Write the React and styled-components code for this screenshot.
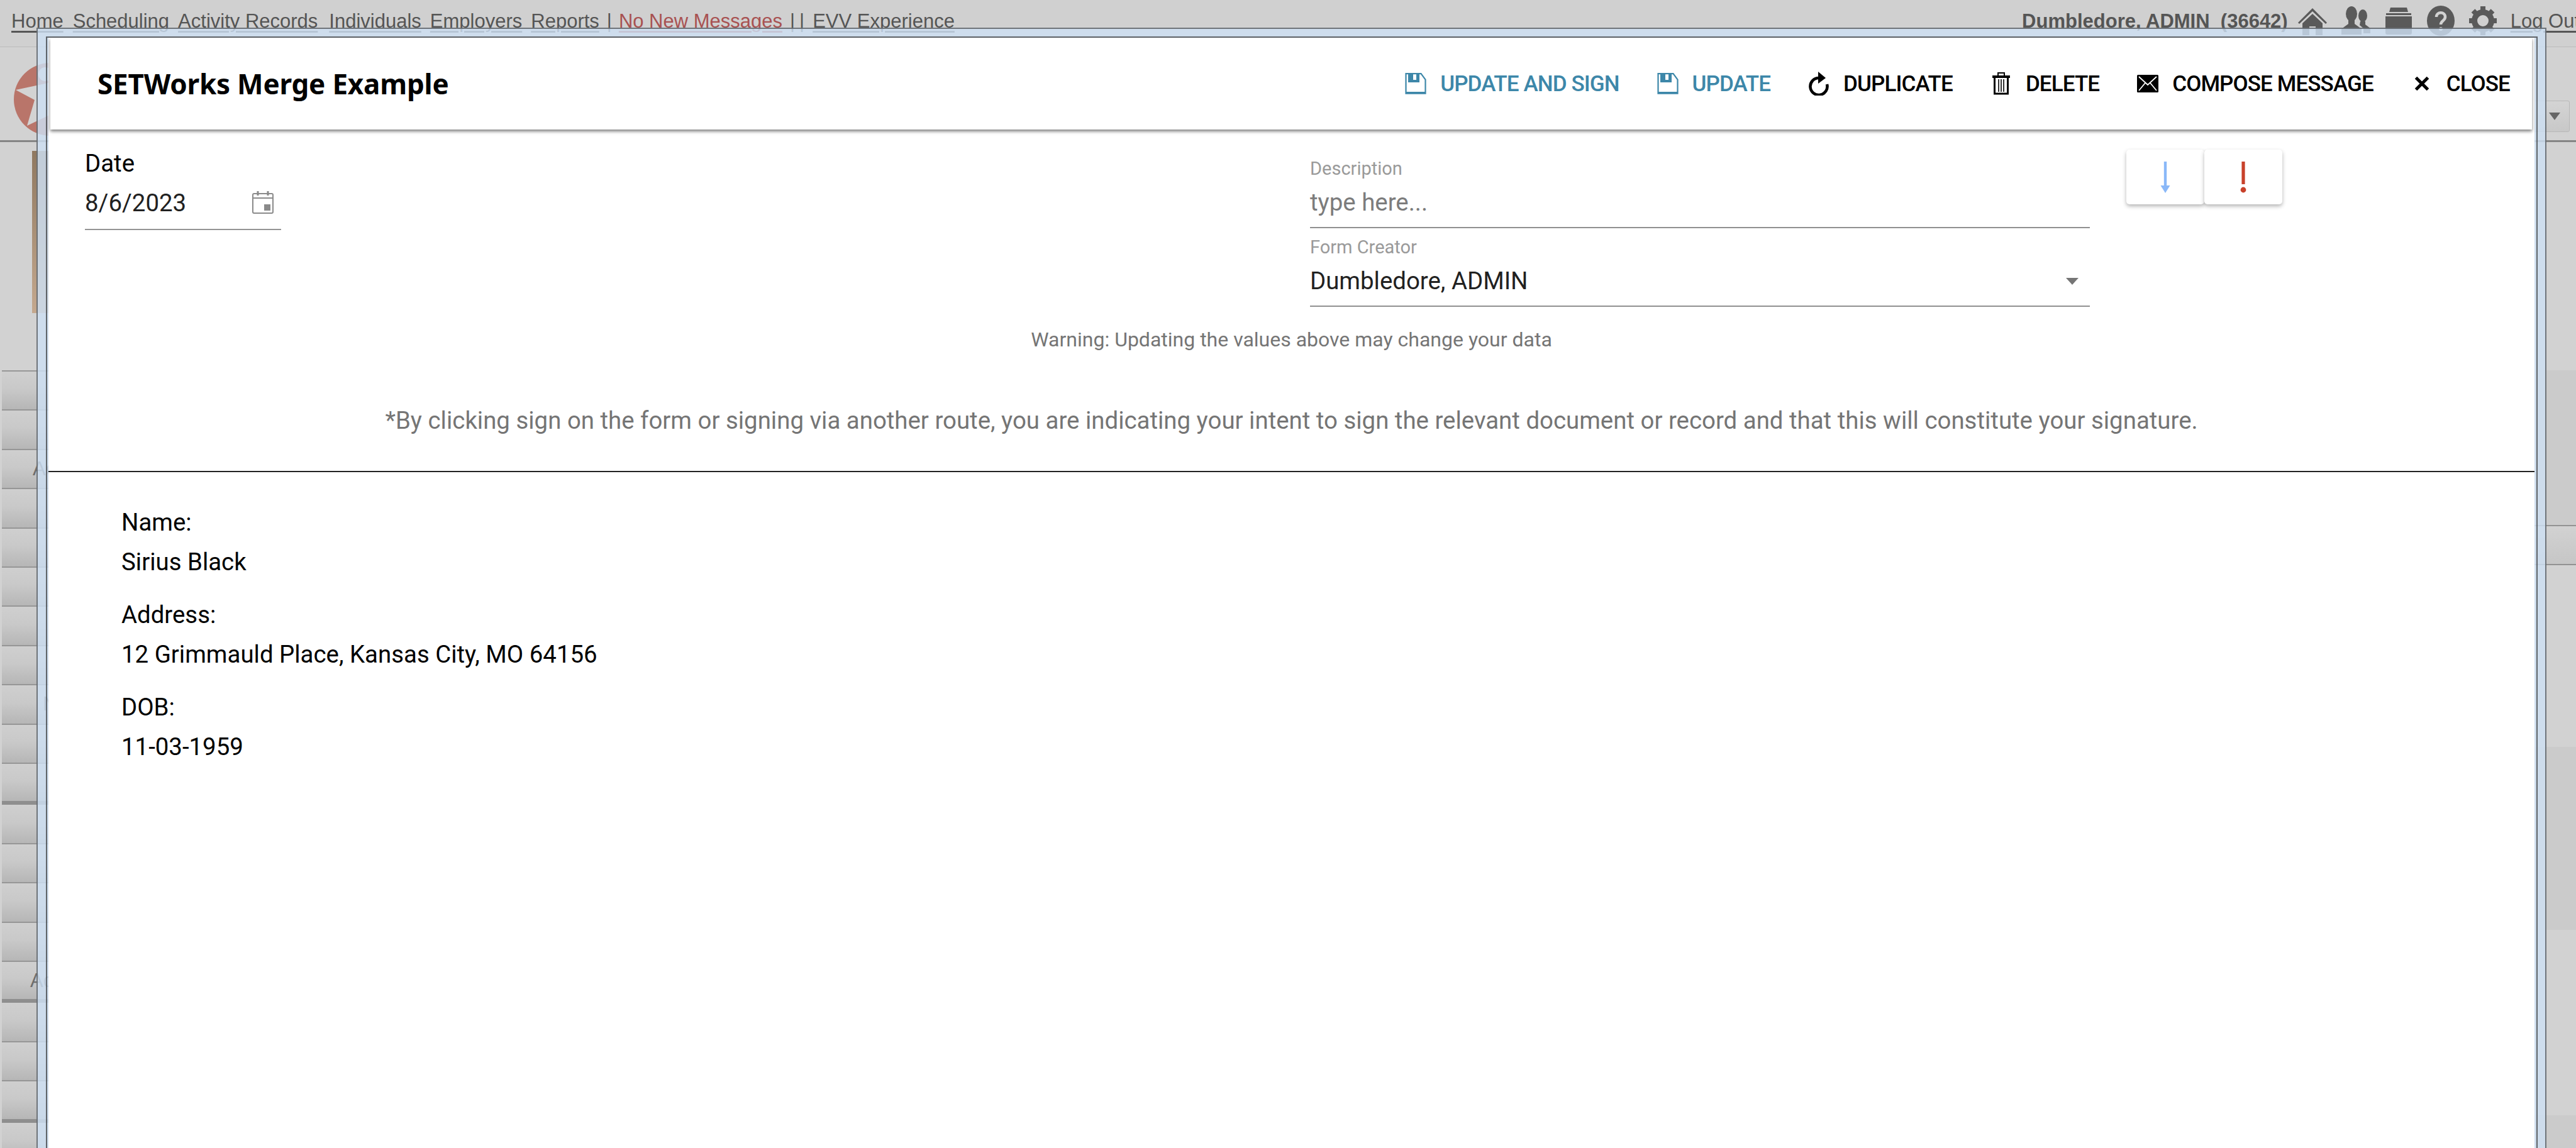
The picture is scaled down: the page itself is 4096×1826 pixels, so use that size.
import React from 'react';
import styled, { createGlobalStyle } from 'styled-components';

const GlobalStyle = createGlobalStyle`
  html, body { margin: 0; padding: 0; background: #d2d2d2; }
  * { box-sizing: border-box; }
`;

const navLinks = [
  { label: 'Home', gap: 15 },
  { label: 'Scheduling', gap: 14 },
  { label: 'Activity Records', gap: 18 },
  { label: 'Individuals', gap: 14 },
  { label: 'Employers', gap: 14 },
  { label: 'Reports', gap: 0 },
];

const sidebarRows = [
  {}, {}, { label: 'Ac', indent: 49 }, {}, {}, {}, {}, {},
  { label: 'N', indent: 65 }, {}, { heavy: true }, {}, {}, {}, {},
  { label: 'Ac', indent: 45, heavy: true }, {}, {}, { heavy: true }, {},
];

const actions = [
  { label: 'UPDATE AND SIGN', icon: 'save', accent: true },
  { label: 'UPDATE', icon: 'save', accent: true },
  { label: 'DUPLICATE', icon: 'duplicate' },
  { label: 'DELETE', icon: 'trash' },
  { label: 'COMPOSE MESSAGE', icon: 'mail' },
  { label: 'CLOSE', icon: 'close' },
];

const mergeFields = [
  { name: 'Name:', value: 'Sirius Black' },
  { name: 'Address:', value: '12 Grimmauld Place, Kansas City, MO 64156' },
  { name: 'DOB:', value: '11-03-1959' },
];

const ActionIcon = ({ type }) => {
  if (type === 'save') {
    return (
      <svg width="34" height="34" viewBox="0 0 34 34" fill="none">
        <path d="M1.5 1.2h24l7 9.5v22H1.5z" stroke="currentColor" strokeWidth="2.2" />
        <path fillRule="evenodd" d="M5 1h18v14H5zM13 2v9h5V2z" fill="currentColor" />
        <path d="M1 30h32v3H1z" fill="currentColor" />
      </svg>
    );
  }
  if (type === 'duplicate') {
    return (
      <svg width="34" height="38" viewBox="0 0 34 38" fill="none">
        <path d="M17 10a13.5 13.5 0 1 0 13 10" stroke="currentColor" strokeWidth="4.6" />
        <path d="M16 0l12 10-12 9z" fill="currentColor" />
      </svg>
    );
  }
  if (type === 'trash') {
    return (
      <svg width="28" height="36" viewBox="0 0 28 36" fill="none">
        <path d="M0 5h28v4H0z" fill="currentColor" />
        <path d="M9 5V1h10v4" stroke="currentColor" strokeWidth="2" />
        <path d="M3.5 8v26h21V8" stroke="currentColor" strokeWidth="3" />
        <path d="M10 11v20M14 11v20M18 11v20" stroke="currentColor" strokeWidth="1.6" />
      </svg>
    );
  }
  if (type === 'mail') {
    return (
      <svg width="34" height="28" viewBox="0 0 34 28">
        <rect width="34" height="28" rx="1.5" fill="currentColor" />
        <path d="M3 3l14 13L31 3M3 25l10-12M31 25L21 13" stroke="#fff" strokeWidth="1.8" fill="none" />
      </svg>
    );
  }
  return (
    <svg width="24" height="24" viewBox="0 0 24 24">
      <path d="M2.5 2.5l19 19M21.5 2.5l-19 19" stroke="currentColor" strokeWidth="5" />
    </svg>
  );
};

const CalendarIcon = () => (
  <svg width="34" height="36" viewBox="0 0 34 36" fill="none">
    <rect x="1" y="4" width="32" height="31" rx="2" stroke="#8a8a8a" strokeWidth="2" />
    <path d="M1 11h32" stroke="#8a8a8a" strokeWidth="2" />
    <path d="M9 0v7M25 0v7" stroke="#8a8a8a" strokeWidth="3" />
    <rect x="19" y="21" width="10" height="10" fill="#8a8a8a" />
  </svg>
);

const HomeIcon = () => (
  <svg width="46" height="46" viewBox="0 0 46 46">
    <path d="M23 3L0 26l2 2L23 8l21 20 2-2z" fill="#5a5a5a" />
    <path d="M23 12L7 27v19h11V32h10v14h11V27z" fill="#5a5a5a" />
  </svg>
);

const PeopleIcon = () => (
  <svg width="46" height="46" viewBox="0 0 46 46" fill="#5a5a5a">
    <ellipse cx="16" cy="12" rx="9" ry="12" />
    <path d="M11 22h10v6l11 8v9H0v-9l11-8z" />
    <ellipse cx="34" cy="15" rx="7" ry="10" />
    <path d="M30 24h8v5l8 6v8H35v-8l-6-5z" />
  </svg>
);

const BoxIcon = () => (
  <svg width="44" height="46" viewBox="0 0 44 46" fill="#5a5a5a">
    <path d="M9 2h26l2 7H7z" />
    <path d="M2 11h40v3H2z" />
    <path d="M1 16h42v26a3 3 0 0 1-3 3H4a3 3 0 0 1-3-3z" />
  </svg>
);

const HelpIcon = () => (
  <svg width="44" height="48" viewBox="0 0 44 48">
    <ellipse cx="22" cy="24" rx="22" ry="24" fill="#5a5a5a" />
    <path d="M15 18c0-9 14-9 14 0 0 6-7 6-7 12" stroke="#d2d2d2" strokeWidth="4.5" fill="none" />
    <circle cx="22" cy="37" r="3" fill="#d2d2d2" />
  </svg>
);

const GearIcon = () => (
  <svg width="44" height="46" viewBox="0 0 44 46">
    <circle cx="22" cy="23" r="13.5" fill="none" stroke="#5a5a5a" strokeWidth="9" />
    <path
      d="M22 0v46M0 23h44M6.5 7l31 32M37.5 7l-31 32"
      stroke="#5a5a5a"
      strokeWidth="8"
      strokeDasharray="8 30 8 30"
    />
  </svg>
);

const Logo = () => (
  <svg width="116" height="116" viewBox="0 0 116 116">
    <circle cx="58" cy="58" r="58" fill="#b9756a" />
    <circle cx="50" cy="18" r="11" fill="#d3d3d3" />
    <path d="M3 43l75-16 12 40-69 33 12-41z" fill="#d3d3d3" />
  </svg>
);

const App = () => (
  <Page>
    <GlobalStyle />
    <TopNav>
      {navLinks.map((link) => (
        <NavLink key={link.label} $gap={link.gap}>{link.label}</NavLink>
      ))}
      <NavBar>|</NavBar>
      <NavLink $alert>No New Messages</NavLink>
      <NavBar $double>||</NavBar>
      <NavLink>EVV Experience</NavLink>
      <UserArea>
        <UserName>Dumbledore, ADMIN&nbsp;&nbsp;(36642)</UserName>
        <NavIcons>
          <HomeIcon />
          <PeopleIcon />
          <BoxIcon />
          <HelpIcon />
          <GearIcon />
        </NavIcons>
        <NavLink>Log Out</NavLink>
      </UserArea>
    </TopNav>
    <Banner>
      <Logo />
      <BannerSelect><BannerArrow /></BannerSelect>
    </Banner>
    <Body>
      <Sidebar>
        <Photo />
        <RowList>
          {sidebarRows.map((row, i) => (
            <SideRow key={i} $heavy={row.heavy} $indent={row.indent}>{row.label}</SideRow>
          ))}
        </RowList>
      </Sidebar>
      <Main>
        <Band $h={363} />
        <Band $h={248} $tone="#cbcbcb" $line />
        <Band $h={62} $tone="linear-gradient(#d2d2d2, #c6c6c6)" $line />
        <Band $h={289} />
        <Band $h={291} $tone="#cbcbcb" />
        <Band $h={295} />
        <Band $h={60} $tone="#cbcbcb" />
      </Main>
    </Body>

    <ModalFrame>
      <ModalInner>
        <Panel>
          <PanelHeader>
            <Title>SETWorks Merge Example</Title>
            <Toolbar>
              {actions.map((action) => (
                <ActionButton key={action.label} $accent={action.accent}>
                  <IconSlot><ActionIcon type={action.icon} /></IconSlot>
                  {action.label}
                </ActionButton>
              ))}
            </Toolbar>
          </PanelHeader>

          <FormGrid>
            <DateField>
              <DateLabel>Date</DateLabel>
              <DateValue>
                8/6/2023
                <CalendarIcon />
              </DateValue>
            </DateField>
            <RightFields>
              <Field>
                <SmallLabel>Description</SmallLabel>
                <FieldValue $placeholder>type here...</FieldValue>
              </Field>
              <Field>
                <SmallLabel>Form Creator</SmallLabel>
                <FieldValue>
                  Dumbledore, ADMIN
                  <SelectCaret />
                </FieldValue>
              </Field>
            </RightFields>
            <SortGroup>
              <SortCard>
                <svg width="16" height="50" viewBox="0 0 16 50" fill="none">
                  <path d="M8 0v44" stroke="#8ab8f8" strokeWidth="4.4" />
                  <path d="M0.5 38h15L8 50z" fill="#8ab8f8" />
                </svg>
              </SortCard>
              <SortCard>
                <svg width="10" height="50" viewBox="0 0 10 50" fill="#c8412a">
                  <path d="M2.4 0h5.2v36H2.4z" />
                  <circle cx="5" cy="45" r="4.4" />
                </svg>
              </SortCard>
            </SortGroup>
          </FormGrid>

          <WarningText>Warning: Updating the values above may change your data</WarningText>
          <ConsentText>
            *By clicking sign on the form or signing via another route, you are indicating your intent to sign the relevant document or record and that this will constitute your signature.
          </ConsentText>
          <Divider />

          <MergeBody>
            {mergeFields.map((field) => (
              <MergeGroup key={field.name}>
                <MergeLine>{field.name}</MergeLine>
                <MergeLine>{field.value}</MergeLine>
              </MergeGroup>
            ))}
          </MergeBody>
        </Panel>
      </ModalInner>
    </ModalFrame>
  </Page>
);

export default App;

const Page = styled.div`
  position: relative;
  width: 4096px;
  height: 1826px;
  overflow: hidden;
  background: #d2d2d2;
  font-family: "Liberation Sans", Arial, sans-serif;
`;

const TopNav = styled.div`
  display: flex;
  align-items: baseline;
  height: 75px;
  padding: 16px 0 0 18px;
  background: #d0d0d0;
  border-bottom: 1px solid #bcbcbc;
  font-size: 31px;
  line-height: 36px;
  color: #555;
`;

const NavLink = styled.span`
  margin-right: ${(p) => p.$gap || 0}px;
  text-decoration: underline;
  text-underline-offset: 5px;
  white-space: nowrap;
  color: ${(p) => (p.$alert ? '#a85252' : '#555')};
`;

const NavBar = styled.span`
  margin: ${(p) => (p.$double ? '0 6px 0 12px' : '0 11px 0 12px')};
  letter-spacing: ${(p) => (p.$double ? '7px' : '0')};
  white-space: nowrap;
`;

const UserArea = styled.div`
  display: flex;
  align-items: baseline;
  margin-left: auto;
  margin-right: -6px;
`;

const UserName = styled.span`
  font-weight: bold;
  white-space: nowrap;
`;

const NavIcons = styled.div`
  display: flex;
  align-items: center;
  gap: 23px;
  margin: 0 22px 0 16px;
  align-self: center;
  transform: translateY(-7px);
`;

const Banner = styled.div`
  display: flex;
  align-items: flex-start;
  height: 151px;
  padding: 25px 10px 0 22px;
  border-bottom: 3px solid #858585;
`;

const BannerSelect = styled.div`
  display: flex;
  align-items: center;
  justify-content: flex-end;
  width: 200px;
  height: 50px;
  margin: 60px 0 0 auto;
  padding-right: 14px;
  background: linear-gradient(#d4d4d4, #c8c8c8);
  border: 1px solid #b8b8b8;
  border-radius: 3px;
`;

const BannerArrow = styled.span`
  border-left: 9px solid transparent;
  border-right: 9px solid transparent;
  border-top: 12px solid #666;
`;

const Body = styled.div`
  display: flex;
`;

const Sidebar = styled.div`
  width: 400px;
  padding: 14px 0 0 3px;
`;

const Photo = styled.div`
  width: 300px;
  height: 258px;
  margin-left: 48px;
  background: linear-gradient(#8f7860, #c4a88e);
`;

const RowList = styled.div`
  margin-top: 91px;
  border-top: 2px solid #969696;
`;

const SideRow = styled.div`
  height: ${(p) => (p.$heavy ? 65.5 : 62.4)}px;
  padding-left: ${(p) => p.$indent || 0}px;
  line-height: 60px;
  font-size: 31px;
  color: #6d6d6d;
  background: linear-gradient(#cfcfcf 0%, #c9c9c9 45%, #b6b6b6 100%);
  border-bottom: ${(p) => (p.$heavy ? 6 : 2)}px solid ${(p) => (p.$heavy ? '#8e8e8e' : '#969696')};
`;

const Main = styled.div`
  flex: 1;
`;

const Band = styled.div`
  height: ${(p) => p.$h}px;
  background: ${(p) => p.$tone || '#d2d2d2'};
  border-bottom: ${(p) => (p.$line ? '2px solid #929292' : 'none')};
`;

const ModalFrame = styled.div`
  position: absolute;
  left: 58px;
  top: 44px;
  width: 3991px;
  height: 1900px;
  padding: 12px 12px 12px 13px;
  background: rgba(205, 223, 243, 0.82);
  border: 2px solid rgba(60, 60, 60, 0.65);
`;

const ModalInner = styled.div`
  height: 100%;
  padding: 0 3px 0 2px;
  border: 2px solid rgba(50, 50, 50, 0.7);
`;

const Panel = styled.div`
  height: 100%;
  background: #fff;
  font-family: Roboto, Arial, sans-serif;
`;

const PanelHeader = styled.div`
  display: flex;
  align-items: center;
  justify-content: space-between;
  height: 146px;
  margin: 0 4px 0 3px;
  padding: 0 35px 0 75px;
  box-shadow: 0 3px 5px rgba(0, 0, 0, 0.5);
`;

const Title = styled.h1`
  margin: 0;
  font-family: "Noto Sans", sans-serif;
  font-size: 44px;
  font-weight: 700;
  letter-spacing: -0.2px;
  color: #000;
  white-space: nowrap;
`;

const Toolbar = styled.div`
  display: flex;
  align-items: center;
  gap: 60px;
`;

const ActionButton = styled.div`
  display: flex;
  align-items: center;
  gap: 22px;
  font-size: 35px;
  font-weight: 500;
  letter-spacing: -0.9px;
  white-space: nowrap;
  color: ${(p) => (p.$accent ? '#3d87a9' : '#000')};
`;

const IconSlot = styled.span`
  display: flex;
  align-items: center;
  justify-content: center;
  width: 34px;
  height: 38px;
`;

const FormGrid = styled.div`
  display: grid;
  grid-template-columns: 1948px 1240px auto;
  align-items: start;
  padding: 32px 0 0 58px;
`;

const DateField = styled.div`
  width: 312px;
`;

const DateLabel = styled.div`
  font-size: 38.4px;
  line-height: 44px;
  color: #000;
`;

const DateValue = styled.div`
  display: flex;
  align-items: center;
  justify-content: space-between;
  height: 84px;
  padding: 0 12px 2px 0;
  font-size: 38.4px;
  color: #212121;
  border-bottom: 2px solid #949494;
`;

const RightFields = styled.div`
  display: flex;
  flex-direction: column;
`;

const Field = styled.div`
  height: 125px;
  padding-top: 12px;
  border-bottom: 2px solid #909090;
`;

const SmallLabel = styled.div`
  font-size: 29px;
  line-height: 36px;
  color: #9a9a9a;
`;

const FieldValue = styled.div`
  display: flex;
  align-items: center;
  justify-content: space-between;
  margin-top: 13px;
  padding-right: 18px;
  font-size: 38.4px;
  line-height: 46px;
  color: ${(p) => (p.$placeholder ? '#7c7c7c' : '#212121')};
`;

const SelectCaret = styled.span`
  border-left: 10px solid transparent;
  border-right: 10px solid transparent;
  border-top: 11px solid #757575;
`;

const SortGroup = styled.div`
  display: flex;
  margin-left: 58px;
`;

const SortCard = styled.div`
  display: flex;
  align-items: center;
  justify-content: center;
  width: 124px;
  height: 87px;
  background: #fff;
  border-radius: 5px;
  box-shadow: 0 3px 6px rgba(0, 0, 0, 0.3);
`;

const WarningText = styled.div`
  margin-top: 32px;
  text-align: center;
  font-size: 32px;
  line-height: 40px;
  color: #757575;
`;

const ConsentText = styled.div`
  margin-top: 85px;
  text-align: center;
  font-size: 38.4px;
  line-height: 48px;
  color: #757575;
`;

const Divider = styled.hr`
  height: 2px;
  margin: 56px 0 0;
  border: none;
  background: #222;
`;

const MergeBody = styled.div`
  display: flex;
  flex-direction: column;
  gap: 21px;
  padding: 48px 0 0 116px;
`;

const MergeGroup = styled.div``;

const MergeLine = styled.div`
  font-size: 38.4px;
  line-height: 63px;
  color: #000;
`;
